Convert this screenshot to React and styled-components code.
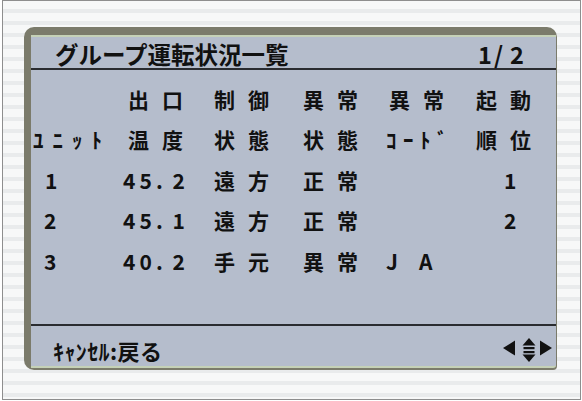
import React from 'react'
import styled, { createGlobalStyle } from 'styled-components'

const Global = createGlobalStyle`
  html, body {
    margin: 0;
    padding: 0;
    background: #ffffff;
  }
  body {
    font-family: "Noto Sans CJK JP", "Noto Sans", sans-serif;
  }
`

const Page = styled.div`
  width: 582px;
  height: 401px;
  padding: 0 1px 1px 2px;
  box-sizing: border-box;
`

const Bezel = styled.div`
  width: 100%;
  height: 100%;
  box-sizing: border-box;
  border: 1px solid #8e8e8e;
  background: repeating-linear-gradient(
    to bottom,
    #f7f8f8 0px,
    #f7f8f8 8px,
    #e9ebec 8px,
    #e9ebec 12px
  );
  padding: 26px 0 0 21px;
`

const Frame = styled.div`
  width: 533px;
  height: 343px;
  box-sizing: border-box;
  background: #7b7b6b;
  border-radius: 10px 10px 4px 10px;
  padding: 8px 1px 2px 7px;
  display: flex;
`

const Screen = styled.div`
  flex: 1;
  display: flex;
  flex-direction: column;
  background: #b5bdcc;
  border-top: 2px solid #c5d1b7;
  border-bottom: 2px solid #c5d1b7;
  border-radius: 0 0 3px 0;
  color: #111111;
`

const TitleBar = styled.div`
  height: 33px;
  box-sizing: border-box;
  border-bottom: 2px solid #2a2c30;
  display: flex;
  align-items: center;
  justify-content: space-between;
  padding: 5px 30px 0 24px;
  font-size: 23.5px;
  font-weight: 700;
  line-height: 1;
`

const Table = styled.div`
  height: 256px;
  box-sizing: border-box;
  padding-top: 9px;
  display: grid;
  grid-template-columns: 97px 86px 89px 83px 90px 1fr;
  grid-auto-rows: 40.5px;
  font-size: 21px;
  font-weight: 700;
  line-height: 1;
  align-items: center;
  border-bottom: 2px solid #2a2c30;
`

const Footer = styled.div`
  flex: 1;
  display: flex;
  align-items: center;
  justify-content: space-between;
  padding: 7px 3px 0 22px;
  font-size: 22px;
  font-weight: 700;
  line-height: 1;
  letter-spacing: 0.4px;
`

const Run = styled.span`
  display: flex;
  white-space: pre;
  margin-left: ${p => p.$indent || 0}px;
`

const Glyph = styled.span`
  display: inline-block;
  flex: none;
  width: ${p => p.$w}px;
  text-align: ${p => p.$align || 'left'};
`

const Chars = ({ text, w = 34, indent, align }) => (
  <Run $indent={indent}>
    {[...text].map((c, i) => (
      <Glyph key={i} $w={w} $align={align}>{c}</Glyph>
    ))}
  </Run>
)

const Arrows = () => (
  <svg width="50" height="26" viewBox="0 0 50 26">
    <g fill="#111">
      <polygon points="0,11 12,3.5 12,18.5" />
      <polygon points="19.5,8.5 26,1 32.5,8.5" />
      <rect x="20.5" y="10" width="11" height="2.2" />
      <rect x="20.5" y="14" width="11" height="2.2" />
      <polygon points="19.5,17.5 32.5,17.5 26,25" />
      <polygon points="37,3.5 49,11 37,18.5" />
    </g>
  </svg>
)

const rows = [
  [{ t: '' }, { t: '出口' }, { t: '制御' }, { t: '異常' }, { t: '異常', indent: 3 }, { t: '起動' }],
  [{ t: 'ﾕﾆｯﾄ', w: 19.5, indent: 2 }, { t: '温度' }, { t: '状態' }, { t: '状態' }, { t: 'ｺｰﾄﾞ', w: 17 }, { t: '順位' }],
  [{ t: '1', indent: 14 }, { t: '45.2', w: 16.5, indent: -5 }, { t: '遠方' }, { t: '正常' }, { t: '' }, { t: '1', indent: 28 }],
  [{ t: '2', indent: 13 }, { t: '45.1', w: 16.5, indent: -5 }, { t: '遠方' }, { t: '正常' }, { t: '' }, { t: '2', indent: 28 }],
  [{ t: '3', indent: 13 }, { t: '40.2', w: 16.5, indent: -5 }, { t: '手元' }, { t: '異常' }, { t: 'JA', w: 33 }, { t: '' }],
]

export default function App() {
  return (
    <>
      <Global />
      <Page>
        <Bezel>
          <Frame>
            <Screen>
              <TitleBar>
                <span>グループ運転状況一覧</span>
                <Chars text="1/2" w={16} />
              </TitleBar>
              <Table>
                {rows.map((row, r) =>
                  row.map((cell, c) => (
                    <Chars key={r + '-' + c} text={cell.t} w={cell.w} indent={cell.indent} />
                  ))
                )}
              </Table>
              <Footer>
                <span>ｷｬﾝｾﾙ:戻る</span>
                <Arrows />
              </Footer>
            </Screen>
          </Frame>
        </Bezel>
      </Page>
    </>
  )
}
